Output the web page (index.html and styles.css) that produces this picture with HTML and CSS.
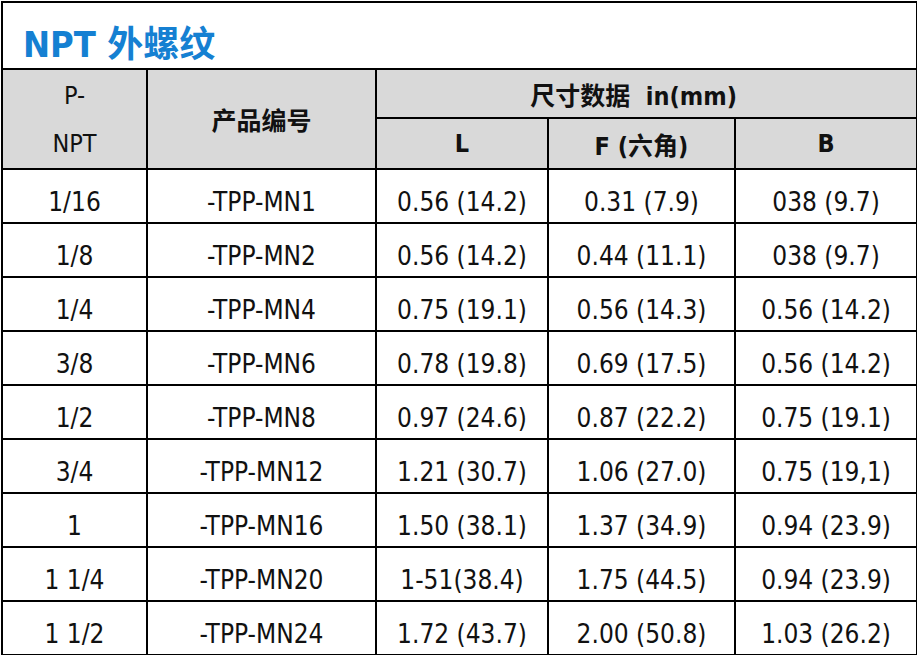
FILE: index.html
```html
<!DOCTYPE html>
<html lang="zh">
<head>
<meta charset="utf-8">
<title>NPT 外螺纹</title>
<link rel="stylesheet" href="styles.css">
</head>
<body>
<table class="spec">
  <colgroup>
    <col class="c1"><col class="c2"><col class="c3"><col class="c4"><col class="c5">
  </colgroup>
  <tr class="title-row">
    <th colspan="5" class="title">NPT 外螺纹</th>
  </tr>
  <tr class="head1">
    <th rowspan="2" class="pnpt"><span>P-</span><span>NPT</span></th>
    <th rowspan="2" class="hbold">产品编号</th>
    <th colspan="3" class="hbold dims">尺寸数据&nbsp; in(mm)</th>
  </tr>
  <tr class="head2">
    <th class="hbold">L</th>
    <th class="hbold">F (六角)</th>
    <th class="hbold">B</th>
  </tr>
  <tr><td>1/16</td><td>-TPP-MN1</td><td>0.56 (14.2)</td><td>0.31 (7.9)</td><td>038 (9.7)</td></tr>
  <tr><td>1/8</td><td>-TPP-MN2</td><td>0.56 (14.2)</td><td>0.44 (11.1)</td><td>038 (9.7)</td></tr>
  <tr><td>1/4</td><td>-TPP-MN4</td><td>0.75 (19.1)</td><td>0.56 (14.3)</td><td>0.56 (14.2)</td></tr>
  <tr><td>3/8</td><td>-TPP-MN6</td><td>0.78 (19.8)</td><td>0.69 (17.5)</td><td>0.56 (14.2)</td></tr>
  <tr><td>1/2</td><td>-TPP-MN8</td><td>0.97 (24.6)</td><td>0.87 (22.2)</td><td>0.75 (19.1)</td></tr>
  <tr><td>3/4</td><td>-TPP-MN12</td><td>1.21 (30.7)</td><td>1.06 (27.0)</td><td>0.75 (19,1)</td></tr>
  <tr><td>1</td><td>-TPP-MN16</td><td>1.50 (38.1)</td><td>1.37 (34.9)</td><td>0.94 (23.9)</td></tr>
  <tr><td>1 1/4</td><td>-TPP-MN20</td><td>1-51(38.4)</td><td>1.75 (44.5)</td><td>0.94 (23.9)</td></tr>
  <tr><td>1 1/2</td><td>-TPP-MN24</td><td>1.72 (43.7)</td><td>2.00 (50.8)</td><td>1.03 (26.2)</td></tr>
</table>
</body>
</html>
```

FILE: styles.css
```css
html, body {
  margin: 0;
  padding: 0;
  background: #ffffff;
}

.spec {
  margin: 1px;
  width: 915px;
  border-collapse: collapse;
  table-layout: fixed;
  font-family: "DejaVu Sans", "Noto Sans CJK SC", sans-serif;
  font-stretch: condensed;
  color: #111111;
}

.c1 { width: 145px; }
.c2 { width: 229px; }
.c3 { width: 172px; }
.c4 { width: 187px; }
.c5 { width: 182px; }

.spec th,
.spec td {
  border: 2px solid #000000;
  text-align: center;
  padding: 0;
}

.title-row { height: 67px; }

.spec th.title {
  text-align: left;
  padding: 10px 0 0 20px;
  font-size: 36px;
  font-weight: bold;
  color: #1580d2;
  background: #ffffff;
  font-family: "DejaVu Sans", "Noto Sans CJK SC", sans-serif;
}

.head1 { height: 49px; }
.head2 { height: 50px; }

.head1 th,
.head2 th {
  background: #d9d9d9;
  font-size: 25px;
}

.hbold {
  font-weight: bold;
  padding-top: 4px;
}

.spec th.dims {
  padding-right: 26px;
}

.spec th.pnpt {
  font-weight: normal;
  font-size: 25px;
}

.pnpt span {
  display: block;
  line-height: 49px;
}

.pnpt span:first-child {
  padding-top: 3px;
  line-height: 46px;
}

.spec td {
  height: 54px;
  font-size: 26px;
  line-height: 26px;
  vertical-align: bottom;
  padding-bottom: 7px;
  box-sizing: border-box;
}
```
